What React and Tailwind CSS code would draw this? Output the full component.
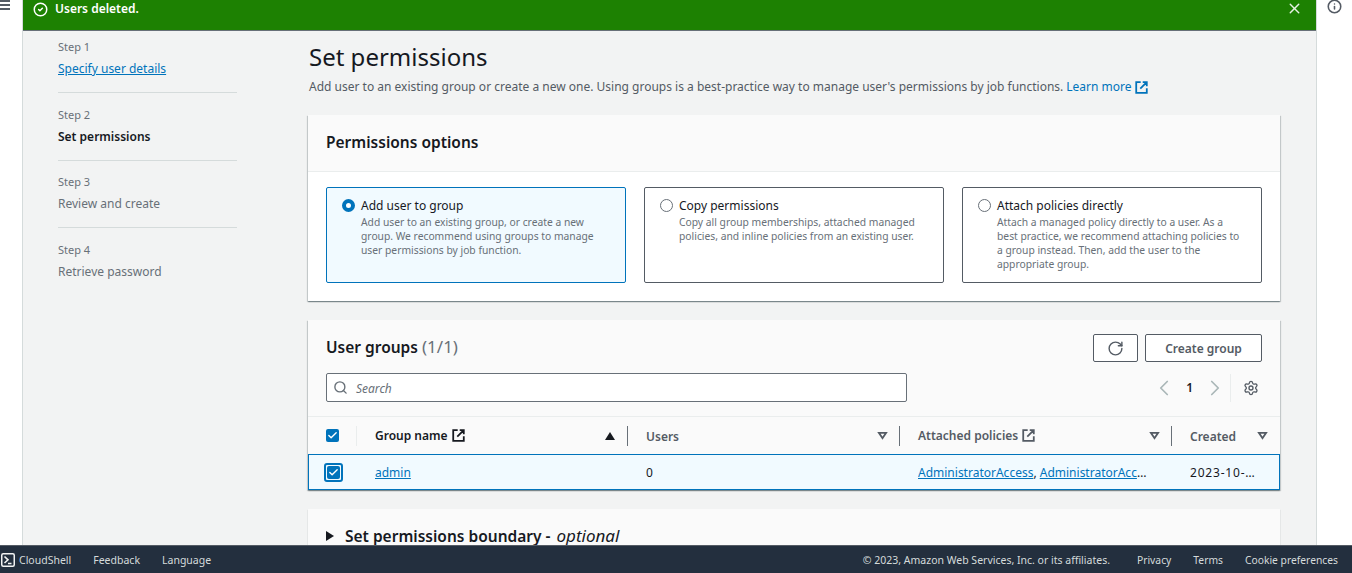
import React from "react";
import { CheckCircle2, X, Info, RotateCw, ChevronLeft, ChevronRight, Settings, Search, Check } from "lucide-react";

const ExternalIcon = ({ className }) => (
  <svg viewBox="0 0 16 16" fill="none" stroke="currentColor" strokeWidth="2.2" className={className}>
    <path d="M9.5 1.5h5v5M6.5 9.5l8-8M14.5 9v5.5h-13v-13H7" />
  </svg>
);

const SortDown = () => (
  <svg viewBox="0 0 12 10" className="w-[11px] h-[9px] text-[#545b64]" fill="none" stroke="currentColor" strokeWidth="2">
    <path d="M2 2h8L6 8z" />
  </svg>
);

const CheckBox = ({ className = "" }) => (
  <span className={`flex items-center justify-center w-[13px] h-[13px] rounded-[2px] bg-[#0073bb] ${className}`}>
    <Check className="w-[11px] h-[11px] text-white" strokeWidth={3} />
  </span>
);

const steps = [
  { step: "Step 1", label: "Specify user details", kind: "link" },
  { step: "Step 2", label: "Set permissions", kind: "active" },
  { step: "Step 3", label: "Review and create" },
  { step: "Step 4", label: "Retrieve password" },
];

const options = [
  {
    title: "Add user to group",
    desc: ["Add user to an existing group, or create a new", "group. We recommend using groups to manage", "user permissions by job function."],
    selected: true,
  },
  {
    title: "Copy permissions",
    desc: ["Copy all group memberships, attached managed", "policies, and inline policies from an existing user."],
  },
  {
    title: "Attach policies directly",
    desc: ["Attach a managed policy directly to a user. As a", "best practice, we recommend attaching policies to", "a group instead. Then, add the user to the", "appropriate group."],
  },
];

const Divider = () => <span className="w-px h-[20px] bg-[#687078]" />;

export default function App() {
  return (
    <div className="w-[1352px] h-[573px] flex flex-col overflow-hidden bg-white text-[#16191f] font-['Noto_Sans',sans-serif]">
      <div className="flex flex-1 min-h-0">
        <div className="w-[22px] shrink-0 flex flex-col gap-[2px]">
          <span className="w-[10px] h-[2px] bg-[#545b64]" />
          <span className="w-[10px] h-[2px] bg-[#545b64]" />
          <span className="w-[10px] h-[2px] bg-[#545b64]" />
        </div>
        <div className="w-[1295px] shrink-0 border-x border-[#d5dbdb] bg-[#f2f3f3] overflow-hidden">
          <div className="h-[31px] bg-[#1d8102] border-b border-[#687078] flex items-start justify-between pl-[10px] pr-[13px] pt-[1px] text-white">
            <div className="flex items-center gap-[7px] text-[12px] font-semibold leading-[16px]">
              <CheckCircle2 className="w-[15px] h-[15px]" strokeWidth={2.4} />
              <span>Users deleted.</span>
            </div>
            <X className="w-[17px] h-[17px] -mt-[1px] opacity-90" strokeWidth={2} />
          </div>
          <div className="flex">
            <nav className="ml-[35px] w-[179px] shrink-0 pt-[9px]">
              {steps.map((s, i) => (
                <div key={s.step} className={i < 3 ? "border-b border-[#d5dbdb] pb-[15px] mb-[14.5px]" : ""}>
                  <div className="text-[11px] leading-[14px] text-[#687078]">{s.step}</div>
                  <div
                    className={`mt-[7px] text-[12px] leading-[16px] ${
                      s.kind === "link" ? "text-[#0073bb] underline" : s.kind === "active" ? "font-semibold text-[#16191f]" : "text-[#687078]"
                    }`}
                  >
                    {s.label}
                  </div>
                </div>
              ))}
            </nav>
            <div className="ml-[71px] w-[972px] shrink-0 pt-[10px]">
              <h1 className="pl-px text-[24px] leading-[32px] font-normal">Set permissions</h1>
              <p className="mt-[5px] pl-px text-[12px] leading-[18px] text-[#545b64] whitespace-nowrap flex items-center">
                Add user to an existing group or create a new one. Using groups is a best-practice way to manage user's permissions by job functions.
                <span className="ml-[3px] text-[#0073bb]">Learn more</span>
                <ExternalIcon className="ml-[3px] w-[13px] h-[13px] text-[#0073bb]" />
              </p>

              <section className="mt-[19px] bg-[#fafafa] shadow-[0_1px_1px_0_rgba(0,28,36,0.3),1px_1px_1px_0_rgba(0,28,36,0.15),-1px_1px_1px_0_rgba(0,28,36,0.15)]">
                <div className="h-[57px] px-[18px] pb-[2px] flex items-center border-b border-[#eaeded]">
                  <h2 className="text-[15.5px] font-semibold leading-[22px]">Permissions options</h2>
                </div>
                <div className="bg-white px-[18px] pt-[15px] pb-[18px] grid grid-cols-3 gap-[18px]">
                  {options.map((o) => (
                    <div
                      key={o.title}
                      className={`h-[96px] rounded-[2px] border flex pl-[15px] pt-[10px] ${
                        o.selected ? "border-[#0073bb] bg-[#f1faff]" : "border-[#545b64] bg-white"
                      }`}
                    >
                      <span
                        className={`mt-[1px] w-[13px] h-[13px] rounded-full shrink-0 ${
                          o.selected ? "border-[4px] border-[#0073bb] bg-white" : "border border-[#687078] bg-white"
                        }`}
                      />
                      <div className="ml-[6px]">
                        <div className="text-[12px] leading-[16px] mb-[1px]">{o.title}</div>
                        {o.desc.map((d) => (
                          <div key={d} className="text-[10.3px] leading-[14px] text-[#687078] whitespace-nowrap">{d}</div>
                        ))}
                      </div>
                    </div>
                  ))}
                </div>
              </section>

              <section className="mt-[19px] bg-[#fafafa] shadow-[0_1px_1px_0_rgba(0,28,36,0.3),1px_1px_1px_0_rgba(0,28,36,0.15),-1px_1px_1px_0_rgba(0,28,36,0.15)]">
                <div className="px-[18px] pt-[14px] flex items-start justify-between">
                  <h2 className="text-[15.5px] font-semibold leading-[26px]">
                    User groups <span className="text-[17px] font-normal text-[#687078]">(1/1)</span>
                  </h2>
                  <div className="flex gap-[7px]">
                    <button className="w-[45px] h-[28px] border border-[#545b64] rounded-[2px] bg-white flex items-center justify-center text-[#545b64]">
                      <RotateCw className="w-[17px] h-[17px]" strokeWidth={2} />
                    </button>
                    <button className="w-[117px] h-[28px] border border-[#545b64] rounded-[2px] bg-white text-[12px] font-semibold text-[#545b64] pt-[1px]">
                      Create group
                    </button>
                  </div>
                </div>
                <div className="px-[18px] mt-[11px] h-[43px] flex items-start justify-between">
                  <div className="w-[581px] h-[29px] border border-[#687078] rounded-[2px] bg-white flex items-center pl-[6px] gap-[8px]">
                    <Search className="w-[15px] h-[15px] text-[#687078]" strokeWidth={2.2} />
                    <span className="text-[12px] italic text-[#687078] pt-[2px]">Search</span>
                  </div>
                  <div className="flex items-center h-[30px] pr-[3px]">
                    <ChevronLeft className="w-[26px] h-[26px] text-[#aab7b8]" strokeWidth={1.6} />
                    <span className="ml-[9px] mr-[9px] text-[12px] font-semibold">1</span>
                    <ChevronRight className="w-[26px] h-[26px] text-[#aab7b8]" strokeWidth={1.6} />
                    <span className="ml-[2px] mr-[12px] w-px h-[28px] bg-[#eaeded]" />
                    <Settings className="w-[16px] h-[16px] text-[#545b64]" strokeWidth={2} />
                  </div>
                </div>
                <div className="h-[38px] border-t border-[#eaeded] flex items-center text-[12px] font-semibold text-[#545b64]">
                  <div className="w-[67px] pl-[18px] flex items-center shrink-0">
                    <CheckBox />
                    <span className="ml-[17px] w-px h-[20px] bg-[#eaeded]" />
                  </div>
                  <div className="w-[252px] shrink-0 flex items-center text-[#16191f] pr-[12px]">
                    <span>Group name</span>
                    <ExternalIcon className="ml-[4px] w-[13px] h-[13px]" />
                    <svg viewBox="0 0 10 8" className="ml-auto w-[10px] h-[8px]"><path d="M5 0l5 8H0z" fill="#16191f" /></svg>
                  </div>
                  <Divider />
                  <div className="w-[271px] shrink-0 flex items-center pl-[18px] pr-[11px] justify-between">
                    <span className="mt-[2px]">Users</span>
                    <SortDown />
                  </div>
                  <Divider />
                  <div className="w-[271px] shrink-0 flex items-center pl-[18px] pr-[11px] justify-between">
                    <span className="flex items-center">
                      Attached policies
                      <ExternalIcon className="ml-[4px] w-[13px] h-[13px]" />
                    </span>
                    <SortDown />
                  </div>
                  <Divider />
                  <div className="flex-1 flex items-center pl-[18px] pr-[12px] justify-between">
                    <span className="mt-[2px]">Created</span>
                    <SortDown />
                  </div>
                </div>
                <div className="h-[36px] bg-[#f1faff] border border-[#0073bb] flex items-center text-[12px] pt-[1px]">
                  <div className="w-[66px] pl-[15px] shrink-0">
                    <span className="flex items-center justify-center w-[19px] h-[19px] border-2 border-[#0073bb] rounded-[3px] -mt-[1px]">
                      <CheckBox className="w-[12px] h-[12px]" />
                    </span>
                  </div>
                  <div className="w-[271px] shrink-0 text-[#0073bb] underline">admin</div>
                  <div className="w-[272px] shrink-0">0</div>
                  <div className="w-[231px] mr-[41px] shrink-0 truncate text-[#16191f]">
                    <span className="text-[#0073bb] underline">AdministratorAccess</span>
                    <span>, </span>
                    <span className="text-[#0073bb] underline">AdministratorAccess</span>
                  </div>
                  <div className="w-[67px] truncate tracking-[0.8px]">2023-10-30 12:00</div>
                </div>
              </section>

              <section className="mt-[19px] bg-[#fafafa] shadow-[0_1px_1px_0_rgba(0,28,36,0.3)] h-[60px] px-[18px] pt-[16px]">
                <div className="flex items-center text-[15.5px] leading-[22px] font-semibold">
                  <svg viewBox="0 0 8 10" className="w-[8px] h-[10px] mr-[11px]"><path d="M0 0l8 5-8 5z" fill="#16191f" /></svg>
                  Set permissions boundary - <em className="ml-[6px] text-[17px] font-normal">optional</em>
                </div>
              </section>
            </div>
          </div>
        </div>
        <div className="flex-1 pl-[10px]">
          <Info className="w-[15px] h-[15px] -mt-[1px] text-[#545b64]" strokeWidth={2.5} />
        </div>
      </div>
      <footer className="h-[28px] shrink-0 bg-[#232f3e] border-t border-[#545b64] flex items-center justify-between text-[10.5px] text-[#d5dbdb] pl-[1px] pr-[14px] pt-[2px]">
        <div className="flex items-center">
          <svg viewBox="0 0 14 14" className="w-[14px] h-[14px] -mt-[2px]" fill="none" stroke="#f2f3f3">
            <rect x="0.75" y="0.75" width="12.5" height="12.5" rx="1.5" strokeWidth="1.5" />
            <path d="M3.5 3.5L7 6.8 3.5 10M7 10.5h3.5" strokeWidth="1.6" />
          </svg>
          <span className="ml-[4px]">CloudShell</span>
          <span className="ml-[22px]">Feedback</span>
          <span className="ml-[22px]">Language</span>
        </div>
        <div className="flex items-center">
          <span>© 2023, Amazon Web Services, Inc. or its affiliates.</span>
          <span className="ml-[27px] text-[10.3px]">Privacy</span>
          <span className="ml-[22px] text-[10.3px]">Terms</span>
          <span className="ml-[22px] text-[10.3px]">Cookie preferences</span>
        </div>
      </footer>
    </div>
  );
}
